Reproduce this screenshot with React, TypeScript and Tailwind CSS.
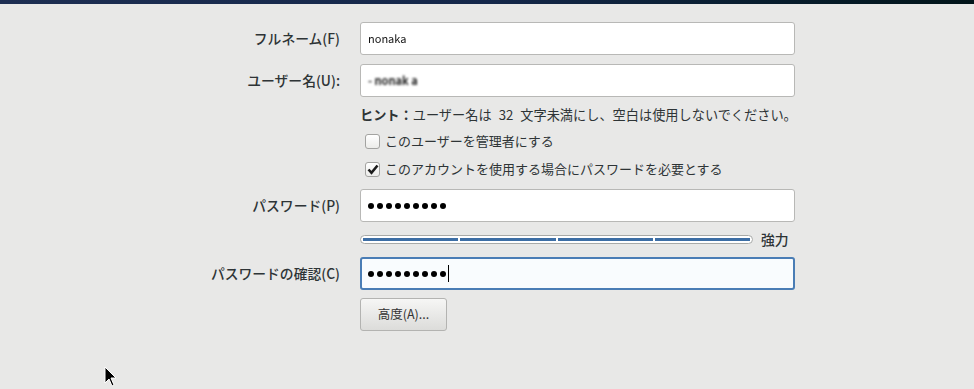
import React from 'react';

const font = { fontFamily: '"Noto Sans CJK JP", "Noto Sans", "DejaVu Sans", sans-serif' };

const Label: React.FC<{ children: React.ReactNode }> = ({ children }) => (
    <div className="flex h-[33px] items-center justify-end text-[13.8px] font-medium text-[#2e3436]">{children}</div>
);

const TextBox: React.FC<{ children?: React.ReactNode; focused?: boolean }> = ({ children, focused }) => (
    <div
        className={
            focused
                ? 'flex h-[33px] items-center rounded-[3px] border-2 border-[#4a7db5] bg-[#f9fcfe] px-[6px]'
                : 'flex h-[33px] items-center rounded-[3px] border border-[#b8b8b6] bg-white px-[7px]'
        }
    >
        {children}
    </div>
);

const Dots: React.FC<{ count: number; caret?: boolean }> = ({ count, caret }) => (
    <div className="flex items-center">
        {Array.from({ length: count }).map((_, i) => (
            <span key={i} className="mr-[3px] h-[6px] w-[6px] rounded-full bg-black" />
        ))}
        {caret && <span className="-ml-[1px] h-[17px] w-[1px] bg-black" />}
    </div>
);

const CheckBox: React.FC<{ checked?: boolean; label: string }> = ({ checked, label }) => (
    <div className="flex h-[28px] items-center gap-[5px] pl-[5px] text-[13px] text-[#2e3436]">
        <span className="flex h-[15px] w-[15px] items-center justify-center rounded-[3px] border border-[#a3a3a1] bg-gradient-to-b from-white to-[#ececea]">
            {checked && (
                <svg width="12" height="11" viewBox="0 0 12 11">
                    <path d="M1.5 5.5 L4.5 8.8 L10.5 1.5" fill="none" stroke="#1c1c1c" strokeWidth="2.6" strokeLinejoin="miter" />
                </svg>
            )}
        </span>
        <span>{label}</span>
    </div>
);

const App: React.FC = () => {
    return (
        <div className="relative h-[389px] w-[974px] overflow-hidden bg-[#e8e8e7]" style={font}>
            <div className="h-[4px] bg-gradient-to-r from-[#1d2e52] via-[#14274a] to-[#02151a]" />

            <div className="mt-[18px] grid grid-cols-[340px_435px] gap-x-[20px]">
                <Label>フルネーム(F)</Label>
                <TextBox>
                    <span className="text-[11px] text-[#111] blur-[0.6px]">nonaka</span>
                </TextBox>

                <div className="col-span-2 h-[9px]" />

                <Label>ユーザー名(U):</Label>
                <TextBox>
                    <span className="text-[11px] font-bold text-[#222] blur-[1px]">- nonak a</span>
                </TextBox>

                <div />
                <div className="pt-[9px]">
                    <div className="flex h-[18px] items-center whitespace-nowrap text-[13.2px] text-[#2e3436]">
                        <span className="font-bold">ヒント：</span>
                        <span>ユーザー名は</span>
                        <span className="mx-[7px]">32</span>
                        <span>文字未満にし、空白は使用しないでください。</span>
                    </div>
                    <div className="mt-[3px]">
                        <CheckBox label="このユーザーを管理者にする" />
                        <CheckBox checked label="このアカウントを使用する場合にパスワードを必要とする" />
                    </div>
                </div>

                <div className="col-span-2 h-[6px]" />

                <Label>パスワード(P)</Label>
                <TextBox>
                    <Dots count={9} />
                </TextBox>

                <div />
                <div className="flex h-[35px] items-center">
                    <div className="flex h-[9px] w-[393px] items-center gap-[2px] rounded-full border border-[#a8aaa8] bg-white px-[2px]">
                        <span className="h-[3px] flex-1 bg-[#3d6ea5]" />
                        <span className="h-[3px] flex-1 bg-[#3d6ea5]" />
                        <span className="h-[3px] flex-1 bg-[#3d6ea5]" />
                        <span className="h-[3px] flex-1 bg-[#3d6ea5]" />
                    </div>
                    <span className="ml-[8px] text-[13.8px] font-medium text-[#2e3436]">強力</span>
                </div>

                <Label>パスワードの確認(C)</Label>
                <TextBox focused>
                    <Dots count={9} caret />
                </TextBox>

                <div />
                <div className="pt-[8px]">
                    <button className="h-[33px] w-[87px] rounded-[3px] border border-[#b3b3b1] bg-gradient-to-b from-[#f6f6f5] to-[#dcdcda] text-[12.5px] text-[#333]">
                        高度(A)...
                    </button>
                </div>
            </div>

            <svg className="absolute left-[104px] top-[366px]" width="14" height="22" viewBox="0 0 14 22">
                <path d="M1 1 L1 17 L5 13 L8 20 L10 19 L7 12 L12 12 Z" fill="#000" stroke="#fff" strokeWidth="1" />
            </svg>
        </div>
    );
};

export default App;
